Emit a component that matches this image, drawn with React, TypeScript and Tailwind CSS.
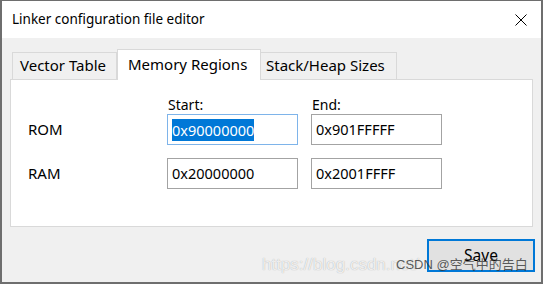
const font = { fontFamily: '"Noto Sans", "Open Sans", "Noto Sans CJK SC", sans-serif' }
const mark = { fontFamily: '"Liberation Sans", "Noto Sans CJK SC", sans-serif' }

function Tab({ label, active = false, first = false }: { label: string; active?: boolean; first?: boolean }) {
  if (active) {
    return (
      <div className="relative z-10 -mb-px h-[31px] w-[144px] border border-b-0 border-[#d9d9d9] bg-white pl-[10px] pt-[3px] text-[15px] text-black">
        {label}
      </div>
    )
  }
  return (
    <div
      className={`h-[27px] border border-b-0 border-[#d9d9d9] bg-[#f0f0f0] pt-[1px] text-[15px] text-black ${
        first ? "w-[105px] pl-[7px]" : "-ml-px w-[137px] pl-[5px]"
      }`}
    >
      {label}
    </div>
  )
}

function Field({ value, focused = false }: { value: string; focused?: boolean }) {
  return (
    <div
      className={`flex h-[31px] w-[131px] shrink-0 items-center border bg-white pl-[4px] text-[14.5px] ${
        focused ? "border-[#7eb4ea]" : "border-[#a3a3a3]"
      }`}
    >
      {focused ? <span className="bg-[#0078d7] leading-[22px] text-white">{value}</span> : <span>{value}</span>}
    </div>
  )
}

function Row({ label, start, end, focused = false }: { label: string; start: string; end: string; focused?: boolean }) {
  return (
    <div className="flex items-center">
      <div className="w-[156px] shrink-0 pl-[17px] text-[15px]">{label}</div>
      <Field value={start} focused={focused} />
      <div className="ml-[13px]">
        <Field value={end} />
      </div>
    </div>
  )
}

export default function App() {
  return (
    <div style={font} className="relative flex h-[284px] w-[543px] flex-col overflow-hidden border-t border-l-2 border-r-2 border-b-2 border-[#6e6e6e] bg-[#f0f0f0] text-black">
      <div className="flex h-[37px] shrink-0 items-center justify-between bg-white pl-[10px] pr-[14px]">
        <span className="text-[13.5px] leading-none">Linker configuration file editor</span>
        <svg width="12" height="12" viewBox="0 0 12 12" className="text-black">
          <path d="M0.5 0.5 L11.5 11.5 M11.5 0.5 L0.5 11.5" stroke="currentColor" strokeWidth="1" />
        </svg>
      </div>

      <div className="flex shrink-0 items-end pl-[10px] pt-[11px]">
        <Tab label="Vector Table" first />
        <Tab label="Memory Regions" active />
        <Tab label="Stack/Heap Sizes" />
      </div>

      <div className="mx-[8px] h-[148px] shrink-0 border border-[#d9d9d9] bg-white pt-[16px]">
        <div className="flex h-[18px] pl-[157px] text-[14px] leading-[17px]">
          <span className="w-[144px]">Start:</span>
          <span>End:</span>
        </div>
        <div className="flex flex-col gap-[13px]">
          <Row label="ROM" start="0x90000000" end="0x901FFFFF" focused />
          <Row label="RAM" start="0x20000000" end="0x2001FFFF" />
        </div>
      </div>

      <div className="flex shrink-0 justify-end pr-[6px] pt-[12px]">
        <button className="flex h-[33px] w-[108px] items-center justify-center border-2 border-[#0078d7] bg-[#e1e1e1] text-[15.5px]">
          Save
        </button>
      </div>

      <span
        style={mark}
        className="pointer-events-none absolute left-[260px] top-[255px] whitespace-nowrap text-[17px] leading-none text-white/80 [text-shadow:0_0_1px_rgba(0,0,0,0.35)]"
      >
        https://blog.csdn.net/
      </span>
      <span
        style={mark}
        className="pointer-events-none absolute left-[394px] top-[257px] whitespace-nowrap text-[13px] leading-none text-[#333]/80"
      >
        CSDN @空气中的告白
      </span>
    </div>
  )
}
